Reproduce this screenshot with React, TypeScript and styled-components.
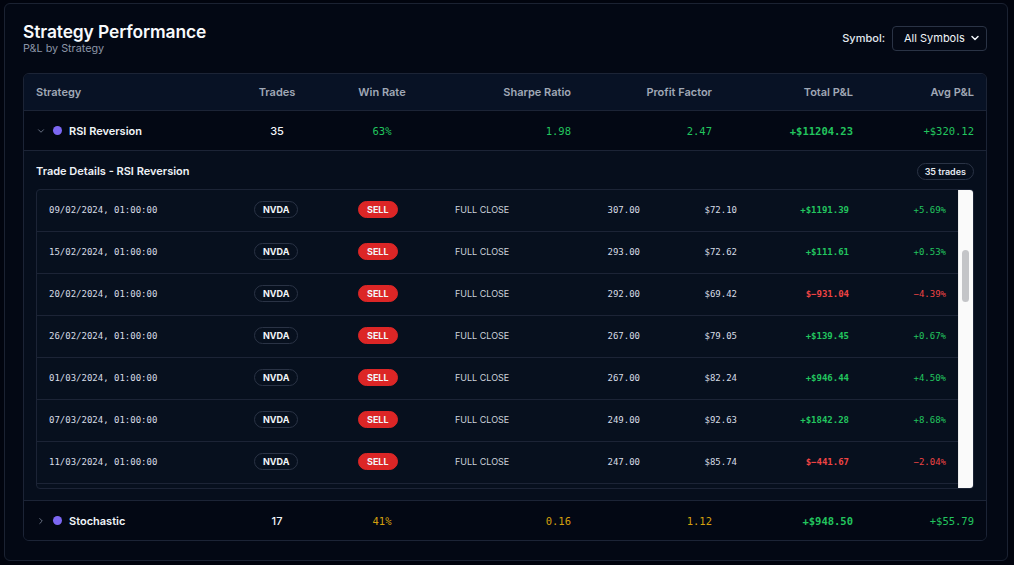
import React, { FC, useEffect, useRef } from "react";
import styled, { createGlobalStyle } from "styled-components";
import { ChevronDown, ChevronRight } from "lucide-react";

const sans = `Inter, "Noto Sans", "Liberation Sans", sans-serif`;
const mono = `"DejaVu Sans Mono", "Liberation Mono", monospace`;

const GlobalStyle = createGlobalStyle`
	html, body {
		margin: 0;
		padding: 0;
		background: #01040e;
		font-family: ${sans};
		color: #f1f5f9;
	}
	#root {
		padding: 3px 6px 4px 4px;
	}
`;

const Card = styled.section`
	height: 558px;
	box-sizing: border-box;
	border: 1px solid #1b2232;
	border-radius: 6px;
	background: #030814;
	padding: 13px 20px 19px 18px;
	display: flex;
	flex-direction: column;
`;

const Head = styled.header`
	display: flex;
	align-items: center;
	justify-content: space-between;
	height: 42px;
	margin-bottom: 14px;
`;

const Title = styled.h2`
	margin: 0;
	font-size: 17.4px;
	font-weight: 600;
	line-height: 22px;
	color: #f8fafc;
	letter-spacing: -0.1px;
`;

const Subtitle = styled.div`
	font-size: 10.8px;
	line-height: 12px;
	color: #8b95a7;
`;

const Filter = styled.label`
	display: flex;
	align-items: center;
	gap: 7px;
	font-size: 11px;
	font-weight: 500;
	color: #e2e8f0;
`;

const Select = styled.div`
	display: flex;
	align-items: center;
	justify-content: space-between;
	width: 95px;
	height: 25px;
	box-sizing: border-box;
	padding: 0 5px 0 11px;
	border: 1px solid #2a3345;
	border-radius: 4px;
	background: #040915;
	color: #f1f5f9;
	font-size: 11px;
	font-weight: 400;
`;

const Table = styled.div`
	border: 1px solid #1c2436;
	border-radius: 6px;
	overflow: hidden;
`;

const Grid = styled.div<{ $head?: boolean }>`
	display: grid;
	grid-template-columns: 203px 100px 110px 146px 141px 141px 1fr;
	align-items: center;
	height: ${(p) => (p.$head ? 36 : 39)}px;
	background: ${(p) => (p.$head ? "#081225" : "#030814")};
	border-bottom: 1px solid #1c2436;
	&:last-child {
		border-bottom: none;
	}
`;

const Cell = styled.div<{ $align?: "left" | "center" | "right" }>`
	padding: 0 12px;
	text-align: ${(p) => p.$align || "left"};
	white-space: nowrap;
`;

const HeadCell = styled(Cell)`
	font-size: 11px;
	font-weight: 600;
	color: #a0a8b6;
`;

const NameCell = styled(Cell)`
	display: flex;
	align-items: center;
	gap: 6px;
	font-size: 11px;
	font-weight: 600;
	color: #f1f5f9;
	svg {
		color: #7b8496;
		margin-right: 1px;
	}
`;

const Dot = styled.span`
	width: 9px;
	height: 9px;
	border-radius: 50%;
	background: #7c67f2;
	margin-right: 1px;
`;

const Plain = styled(Cell)`
	font-size: 11px;
	font-weight: 500;
	color: #f1f5f9;
`;

const Num = styled(Cell)<{ $color: string; $bold?: boolean }>`
	font-family: ${mono};
	font-size: 10.5px;
	color: ${(p) => p.$color};
	font-weight: ${(p) => (p.$bold ? 700 : 400)};
`;

const Details = styled.div`
	background: #060e1c;
	border-bottom: 1px solid #1c2436;
	padding: 11px 12px 11px;
`;

const DetailsHead = styled.div`
	display: flex;
	align-items: center;
	justify-content: space-between;
	height: 18px;
	margin-bottom: 9px;
	font-size: 11px;
	font-weight: 600;
	color: #eef2f7;
`;

const Count = styled.span`
	border: 1px solid #2a3345;
	border-radius: 9px;
	padding: 2px 7px;
	font-size: 9px;
	font-weight: 600;
	color: #e5e9f0;
`;

const Scroller = styled.div`
	display: flex;
	height: 298px;
	border: 1px solid #1c2436;
	border-radius: 4px;
	background: #07101e;
	overflow: hidden;
`;

const Viewport = styled.div`
	flex: 1;
	overflow: hidden;
`;

const Track = styled.div`
	width: 15px;
	box-sizing: border-box;
	background: #fafafa;
	border-left: 1px solid #ececec;
	padding: 60px 4px 0 3px;
`;

const Thumb = styled.div`
	height: 52px;
	border-radius: 4px;
	background: #c4c5c8;
`;

const TradeRow = styled.div`
	display: grid;
	grid-template-columns: 205px 104px 97px 104px 105px 97px 112px 1fr;
	align-items: center;
	height: 41px;
	border-bottom: 1px solid #1c2436;
`;

const TCell = styled.div<{ $align?: "left" | "right" }>`
	padding: 0 12px;
	text-align: ${(p) => p.$align || "left"};
	white-space: nowrap;
	line-height: 14px;
	margin-top: -2px;
`;

const PillCell = styled.div`
	display: flex;
	align-items: center;
	padding: 0 12px;
	margin-top: -2px;
`;

const TNum = styled(TCell)<{ $color?: string; $bold?: boolean }>`
	font-family: ${mono};
	font-size: 9px;
	color: ${(p) => p.$color || "#d7dde6"};
	font-weight: ${(p) => (p.$bold ? 700 : 400)};
`;

const Pill = styled.span<{ $sell?: boolean }>`
	padding: 0 ${(p) => (p.$sell ? 8 : 8)}px;
	line-height: 15px;
	border-radius: 9px;
	font-size: 9px;
	font-weight: 700;
	color: #f1f5f9;
	border: 1px solid ${(p) => (p.$sell ? "#dc2626" : "#2a3345")};
	background: ${(p) => (p.$sell ? "#dc2626" : "transparent")};
`;

const Action = styled(TCell)`
	font-size: 9px;
	color: #cdd3dc;
`;

const GREEN = "#22c55e";
const RED = "#ef4444";
const AMBER = "#d4a00e";

interface Trade {
	date: string;
	qty: string;
	price: string;
	pnl: string;
	pct: string;
	loss: boolean;
}

const raw: [string, string, string, string, string][] = [
	["02/01/2024", "412.00", "$48.17", "+$402.11", "+0.98%"],
	["08/01/2024", "398.00", "$52.25", "+$688.54", "+1.73%"],
	["12/01/2024", "371.00", "$54.72", "$-213.40", "-0.57%"],
	["18/01/2024", "355.00", "$57.10", "+$904.12", "+2.55%"],
	["24/01/2024", "340.00", "$61.30", "+$523.60", "+1.54%"],
	["30/01/2024", "326.00", "$62.75", "$-118.96", "-0.36%"],
	["05/02/2024", "312.00", "$69.32", "+$871.04", "+2.79%"],
	["09/02/2024", "307.00", "$72.10", "+$1191.39", "+5.69%"],
	["15/02/2024", "293.00", "$72.62", "+$111.61", "+0.53%"],
	["20/02/2024", "292.00", "$69.42", "$-931.04", "-4.39%"],
	["26/02/2024", "267.00", "$79.05", "+$139.45", "+0.67%"],
	["01/03/2024", "267.00", "$82.24", "+$946.44", "+4.50%"],
	["07/03/2024", "249.00", "$92.63", "+$1842.28", "+8.68%"],
	["11/03/2024", "247.00", "$85.74", "$-441.67", "-2.04%"],
	["15/03/2024", "244.00", "$87.84", "+$512.40", "+2.39%"],
	["21/03/2024", "239.00", "$91.44", "+$860.40", "+3.94%"],
	["27/03/2024", "236.00", "$90.25", "$-280.84", "-1.32%"],
	["02/04/2024", "233.00", "$89.44", "+$174.75", "+0.84%"],
	["08/04/2024", "228.00", "$87.10", "$-533.52", "-2.69%"],
	["12/04/2024", "226.00", "$88.19", "+$246.34", "+1.24%"],
	["18/04/2024", "231.00", "$84.64", "$-820.05", "-4.19%"],
	["24/04/2024", "235.00", "$79.68", "+$612.05", "+3.27%"],
	["30/04/2024", "229.00", "$86.40", "+$1077.45", "+5.45%"],
	["06/05/2024", "224.00", "$92.15", "+$418.88", "+2.03%"],
	["10/05/2024", "221.00", "$89.84", "+$309.40", "+1.56%"],
	["16/05/2024", "218.00", "$94.36", "+$725.94", "+3.53%"],
	["22/05/2024", "214.00", "$95.38", "$-362.66", "-1.78%"],
	["28/05/2024", "205.00", "$113.90", "+$1496.50", "+6.41%"],
	["03/06/2024", "196.00", "$115.00", "+$282.24", "+1.25%"],
	["07/06/2024", "190.00", "$120.89", "+$631.80", "+2.75%"],
	["13/06/2024", "186.00", "$129.61", "+$948.60", "+3.93%"],
	["19/06/2024", "179.00", "$135.58", "+$577.20", "+2.38%"],
	["25/06/2024", "183.00", "$126.09", "$-716.36", "-3.10%"],
	["01/07/2024", "187.00", "$124.30", "+$298.82", "+1.29%"],
	["05/07/2024", "181.00", "$128.40", "+$485.33", "+2.09%"],
];

const trades: Trade[] = raw.map(([date, qty, price, pnl, pct]) => ({
	date: `${date}, 01:00:00`,
	qty,
	price,
	pnl: pnl.replace("-", "\u2212"),
	pct: pct.replace("-", "\u2212"),
	loss: pnl.includes("-"),
}));

const TradeList: FC = () => {
	const ref = useRef<HTMLDivElement>(null);
	useEffect(() => {
		if (ref.current) ref.current.scrollTop = 7 * 42;
	}, []);
	return (
		<Scroller>
			<Viewport ref={ref}>
				{trades.map((t) => (
					<TradeRow key={t.date}>
						<TNum>{t.date}</TNum>
						<PillCell>
							<Pill>NVDA</Pill>
						</PillCell>
						<PillCell>
							<Pill $sell>SELL</Pill>
						</PillCell>
						<Action>FULL CLOSE</Action>
						<TNum $align="right">{t.qty}</TNum>
						<TNum $align="right">{t.price}</TNum>
						<TNum $align="right" $bold $color={t.loss ? RED : GREEN}>
							{t.pnl}
						</TNum>
						<TNum $align="right" $color={t.loss ? RED : GREEN}>
							{t.pct}
						</TNum>
					</TradeRow>
				))}
			</Viewport>
			<Track>
				<Thumb />
			</Track>
		</Scroller>
	);
};

const App: FC = () => {
	return (
		<>
			<GlobalStyle />
			<Card>
				<Head>
					<div>
						<Title>Strategy Performance</Title>
						<Subtitle>P&amp;L by Strategy</Subtitle>
					</div>
					<Filter>
						Symbol:
						<Select>
							All Symbols
							<ChevronDown size={12} strokeWidth={3} />
						</Select>
					</Filter>
				</Head>
				<Table>
					<Grid $head>
						<HeadCell>Strategy</HeadCell>
						<HeadCell $align="center">Trades</HeadCell>
						<HeadCell $align="center">Win Rate</HeadCell>
						<HeadCell $align="right">Sharpe Ratio</HeadCell>
						<HeadCell $align="right">Profit Factor</HeadCell>
						<HeadCell $align="right">Total P&amp;L</HeadCell>
						<HeadCell $align="right">Avg P&amp;L</HeadCell>
					</Grid>
					<Grid>
						<NameCell>
							<ChevronDown size={10} strokeWidth={2} />
							<Dot />
							RSI Reversion
						</NameCell>
						<Plain $align="center">35</Plain>
						<Num $align="center" $color={GREEN}>63%</Num>
						<Num $align="right" $color={GREEN}>1.98</Num>
						<Num $align="right" $color={GREEN}>2.47</Num>
						<Num $align="right" $color={GREEN} $bold>+$11204.23</Num>
						<Num $align="right" $color={GREEN}>+$320.12</Num>
					</Grid>
					<Details>
						<DetailsHead>
							Trade Details - RSI Reversion
							<Count>35 trades</Count>
						</DetailsHead>
						<TradeList />
					</Details>
					<Grid>
						<NameCell>
							<ChevronRight size={10} strokeWidth={2} />
							<Dot />
							Stochastic
						</NameCell>
						<Plain $align="center">17</Plain>
						<Num $align="center" $color={AMBER}>41%</Num>
						<Num $align="right" $color={AMBER}>0.16</Num>
						<Num $align="right" $color={AMBER}>1.12</Num>
						<Num $align="right" $color={GREEN} $bold>+$948.50</Num>
						<Num $align="right" $color={GREEN}>+$55.79</Num>
					</Grid>
				</Table>
			</Card>
		</>
	);
};

export default App;
